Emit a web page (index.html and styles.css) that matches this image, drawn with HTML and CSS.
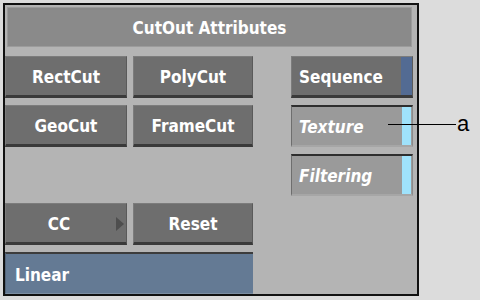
FILE: index.html
```html
<!DOCTYPE html>
<html lang="en">
<head>
  <meta charset="UTF-8">
  <title>CutOut Attributes</title>
  <link rel="stylesheet" href="styles.css">
</head>
<body>
  <div id="panel">
    <div class="title">CutOut Attributes</div>
    <div class="grid">
      <div class="btn c1 r1">RectCut</div>
      <div class="btn c2 r1">PolyCut</div>
      <div class="btn c1 r2">GeoCut</div>
      <div class="btn c2 r2">FrameCut</div>
      <div class="btn c1 r4 menu">CC<span class="arrow"></span></div>
      <div class="btn c2 r4">Reset</div>
      <div class="field c12 r5">Linear</div>

      <div class="btn toggle c4 r1">Sequence<span class="strip dark"></span></div>
      <div class="opt c4 r2">Texture<span class="strip light"></span></div>
      <div class="opt c4 r3">Filtering<span class="strip light"></span></div>
    </div>
  </div>

  <div class="callout">
    <span class="line"></span>
    <span class="tag">a</span>
  </div>
</body>
</html>
```

FILE: styles.css
```css
body {
  margin: 0;
  background-color: #dcdcdc;
  font-family: 'DejaVu Sans Condensed', 'DejaVu Sans', sans-serif;
  width: 480px;
  height: 300px;
  position: relative;
  overflow: hidden;
}
#panel {
  margin: 3px;
  width: 412px;
  height: 289px;
  border: 2px solid #111;
  background-color: #b4b4b4;
}
.title {
  margin: 2px 5px 0 2px;
  height: 38px;
  padding-top: 2px;
  box-sizing: content-box;
  height: 36px;
  border: 1px solid #9c9c9c;
  background-color: #8a8a8a;
  color: #fff;
  font-weight: bold;
  font-size: 17px;
  display: flex;
  align-items: center;
  justify-content: center;
}
.grid {
  margin-top: 9px;
  padding-right: 4px;
  display: grid;
  grid-template-columns: 122px 120px 1fr 122px;
  grid-template-rows: repeat(5, 42px);
  column-gap: 6px;
  row-gap: 7px;
}
.c1 { grid-column: 1; }
.c2 { grid-column: 2; }
.c4 { grid-column: 4; }
.c12 { grid-column: 1 / span 2; }
.r1 { grid-row: 1; }
.r2 { grid-row: 2; }
.r3 { grid-row: 3; }
.r4 { grid-row: 4; }
.r5 { grid-row: 5; }

.btn, .opt, .field {
  position: relative;
  box-sizing: border-box;
  padding-top: 2px;
  color: #fff;
  font-weight: bold;
  font-size: 17px;
  display: flex;
  align-items: center;
}
.btn {
  justify-content: center;
  background-color: #6e6e6e;
  border-top: 1px solid #7c7c7c;
  border-left: 1px solid #7c7c7c;
  border-right: 1px solid #5a5a5a;
  border-bottom: 3px solid #3a3a3a;
}
.menu {
  padding-right: 14px;
}
.arrow {
  position: absolute;
  right: 2px;
  top: 13px;
  border-left: 8px solid #4e4e4e;
  border-top: 7px solid transparent;
  border-bottom: 7px solid transparent;
}
.toggle, .opt, .field {
  justify-content: flex-start;
  padding-left: 7px;
}
.opt {
  background-color: #9a9a9a;
  font-style: italic;
  border-top: 2px solid #2e2e2e;
  border-left: 1px solid #6e6e6e;
  border-right: 1px solid #8a8a8a;
  border-bottom: 2px solid #a6a6a6;
}
.field {
  background-color: #647a94;
  border-top: 2px solid #3c3c3c;
  border-left: 1px solid #54657a;
  border-bottom: 1px solid #7c8ea2;
  padding-left: 9px;
}
.strip {
  position: absolute;
  top: 0;
  bottom: 0;
  right: 0;
  width: 10px;
}
.strip.dark {
  background-color: #536b93;
  width: 11px;
}
.strip.light {
  background-color: #9fe2fb;
  width: 9px;
  right: 1px;
}

.callout {
  position: absolute;
  left: 388px;
  top: 112px;
  display: flex;
  align-items: center;
}
.line {
  width: 68px;
  height: 1px;
  background-color: #000;
}
.tag {
  margin-left: 1px;
  font-family: 'Liberation Sans', Arial, sans-serif;
  font-size: 22px;
  line-height: 24px;
  color: #000;
}
```
